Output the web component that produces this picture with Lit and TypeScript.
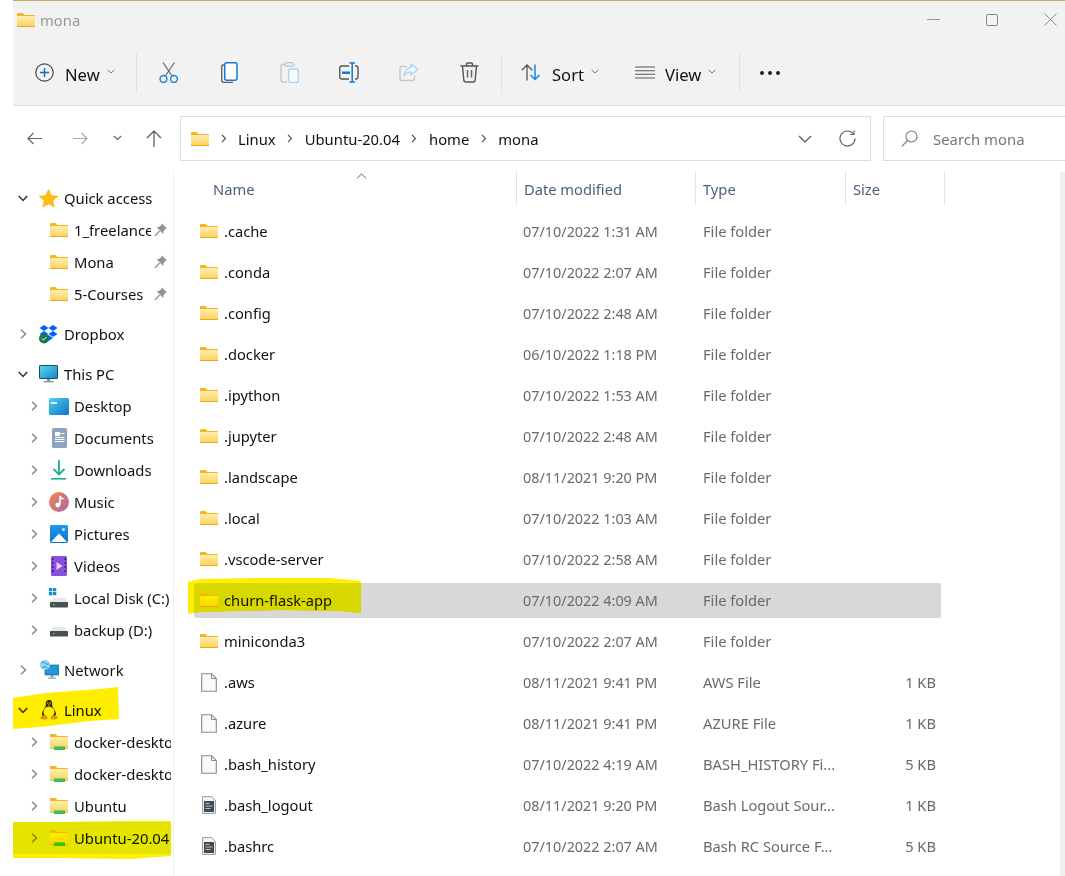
import { LitElement, html, svg, css } from "lit";
import { customElement } from "lit/decorators.js";

const folder = () => html`<svg class="ic" width="18" height="14" viewBox="0 0 18 14"><defs><linearGradient id="fg" x1="0" y1="0" x2="0" y2="1"><stop offset="0" stop-color="#ffeeb0"/><stop offset="1" stop-color="#fcd258"/></linearGradient></defs><path d="M0 1.2Q0 0 1.2 0H5.5L7.5 2H17.2Q18 2 18 3V4H0Z" fill="#f6b51e"/><rect y="3" width="18" height="11" rx=".8" fill="url(#fg)"/><rect y="13" width="18" height="1" fill="#e9aa20"/></svg>`;
const wsl = () => html`<svg class="ic" width="18" height="16" viewBox="0 0 18 16"><defs><linearGradient id="fg2" x1="0" y1="0" x2="0" y2="1"><stop offset="0" stop-color="#ffeeb0"/><stop offset="1" stop-color="#fcd258"/></linearGradient></defs><path d="M0 1.2Q0 0 1.2 0H5.5L7.5 2H17.2Q18 2 18 3V4H0Z" fill="#f6b51e"/><rect y="3" width="18" height="11.5" rx=".8" fill="url(#fg2)"/><rect y="14" width="18" height="1" fill="#c9c2a8"/><rect x="4" y="12.4" width="11" height="3.6" fill="#3fbf4f"/></svg>`;
const star = () => html`<svg class="ic" width="19" height="19" viewBox="0 0 19 19"><path d="M9.5.6 12.2 6.6 18.7 7.3 13.8 11.6 15.2 18 9.5 14.7 3.8 18 5.2 11.6.3 7.3 6.8 6.6Z" fill="#ffbe0b" stroke="#f3a800" stroke-width=".6" stroke-linejoin="round"/></svg>`;
const dropbox = () => html`<svg class="ic" width="19" height="19" viewBox="0 0 19 19"><g fill="#0061fe"><path d="M5 0 9.5 3 5 6 .5 3Z"/><path d="M14 0 18.5 3 14 6 9.5 3Z"/><path d="M5 6 9.5 9 5 12 .5 9Z"/><path d="M14 6 18.5 9 14 12 9.5 9Z"/><path d="M9.5 10 14 13 9.5 16 5 13Z"/></g><circle cx="5" cy="13.5" r="5" fill="#0e7d4b"/><path d="M2.8 13.6 4.4 15.2 7.3 12" fill="none" stroke="#fff" stroke-width="1"/></svg>`;
const monitor = () => html`<svg class="ic" width="19" height="18" viewBox="0 0 19 18"><defs><linearGradient id="mg" x1="0" y1="0" x2="1" y2="1"><stop offset="0" stop-color="#5fd6ee"/><stop offset="1" stop-color="#1287c4"/></linearGradient></defs><rect x=".5" y=".5" width="18" height="13" rx=".6" fill="url(#mg)" stroke="#17506f"/><rect x="8" y="14" width="3" height="2.4" fill="#7d8b93"/><rect x="4.5" y="16" width="10" height="1.4" fill="#8e9aa1"/></svg>`;
const desktop = () => html`<svg class="ic" width="20" height="17" viewBox="0 0 20 17"><defs><linearGradient id="dg" x1="0" y1="0" x2="1" y2="1"><stop offset="0" stop-color="#4fd0f2"/><stop offset="1" stop-color="#1271c6"/></linearGradient></defs><rect width="20" height="17" rx="1.5" fill="url(#dg)"/><rect x="2" y="4" width="6" height="2" fill="#d5f4ff"/></svg>`;
const docs = () => html`<svg class="ic" width="15" height="20" viewBox="0 0 15 20"><rect width="15" height="20" rx="1.5" fill="#8aa4c2"/><g fill="#fff"><rect x="3" y="4" width="5" height="4"/><rect x="8.5" y="5" width="4" height="1"/><rect x="3" y="9" width="9.5" height="1"/><rect x="3" y="11" width="9.5" height="1"/><rect x="3" y="13" width="9.5" height="1"/></g></svg>`;
const downloads = () => html`<svg class="ic" width="16" height="20" viewBox="0 0 16 20"><path d="M8 0V14M2.5 9 8 14.5 13.5 9" fill="none" stroke="#1db28d" stroke-width="1.8"/><rect y="18" width="15" height="1.6" fill="#1db28d"/></svg>`;
const music = () => html`<svg class="ic" width="20" height="20" viewBox="0 0 20 20"><defs><linearGradient id="mu" x1="0" y1="0" x2="1" y2="1"><stop offset="0" stop-color="#f4864a"/><stop offset="1" stop-color="#a76aa2"/></linearGradient></defs><circle cx="10" cy="10" r="10" fill="url(#mu)"/><path d="M11 4V12.5" stroke="#fff" stroke-width="1.6"/><path d="M11 4Q12 6.500 14.500 7" stroke="#fff" stroke-width="1.4" fill="none"/><circle cx="8.800" cy="13" r="2.400" fill="#fff"/></svg>`;
const pictures = () => html`<svg class="ic" width="18" height="18" viewBox="0 0 18 18"><defs><linearGradient id="pg" x1="0" y1="0" x2="0" y2="1"><stop offset="0" stop-color="#1b9bf0"/><stop offset="1" stop-color="#1470c8"/></linearGradient></defs><rect width="18" height="18" rx="1.4" fill="url(#pg)"/><path d="M1 17 9 8.500 17 17Z" fill="#fff"/><circle cx="13.500" cy="4.500" r="1.600" fill="#bfe6ff"/></svg>`;
const videos = () => html`<svg class="ic" width="16" height="20" viewBox="0 0 16 20"><rect width="16" height="20" rx="1.6" fill="#8a4fdc"/><g fill="#3f1d7d"><rect x="1" y="2" width="1.500" height="2"/><rect x="1" y="6" width="1.500" height="2"/><rect x="1" y="10" width="1.500" height="2"/><rect x="1" y="14" width="1.500" height="2"/><rect x="13.500" y="2" width="1.500" height="2"/><rect x="13.500" y="6" width="1.500" height="2"/><rect x="13.500" y="10" width="1.500" height="2"/><rect x="13.500" y="14" width="1.500" height="2"/></g><path d="M5.500 6 11.500 10 5.500 14Z" fill="#e2d2ff"/></svg>`;
const diskBody = svg`<path d="M3 6H15L18 10.500H0Z" fill="#e6e8ea"/><rect y="10" width="18" height="5.500" rx=".8" fill="#4a4f53"/><rect x="3" y="12" width="1.500" height="1.200" fill="#5fe06a"/>`;
const localDisk = () => html`<svg class="ic" width="18" height="20" viewBox="0 0 18 20" style="overflow:visible"><g transform="translate(0 4)">${diskBody}</g><g fill="#1a86dc"><rect x="-1" y="0" width="3.300" height="3.300"/><rect x="3" y="0" width="3.300" height="3.300"/><rect x="-1" y="4" width="3.300" height="3.300"/><rect x="3" y="4" width="3.300" height="3.300"/></g></svg>`;
const backup = () => html`<svg class="ic" width="18" height="16" viewBox="0 0 18 16"><g transform="translate(0 -1)">${diskBody}</g></svg>`;
const network = () => html`<svg class="ic" width="20" height="20" viewBox="0 0 20 20"><rect x="6" y="5" width="14" height="10" rx=".6" fill="#1f9ad6" stroke="#1a5f85" stroke-width=".7"/><rect x="11.500" y="15" width="3" height="2.500" fill="#8a98a0"/><rect x="9" y="17.500" width="8" height="1.300" fill="#9aa6ad"/><circle cx="6" cy="5" r="5" fill="#8fd3f0"/><path d="M2 3Q5 1 6 3T10 4M3 8Q6 5 8 8" fill="none" stroke="#2a8fc4" stroke-width="1"/></svg>`;
const penguin = () => html`<svg class="ic" width="18" height="20" viewBox="0 0 18 20"><path d="M9 0C6 0 5.600 2.500 5.800 5 6 7.500 2 10.500 2 14 2 16 4 17 9 17S16 16 16 14C16 10.500 12 7.500 12.200 5 12.400 2.500 12 0 9 0Z" fill="#2c2c2c"/><ellipse cx="9" cy="12" rx="5.500" ry="5.400" fill="#fff"/><path d="M7.500 4.500H10.500L9 6Z" fill="#e8a800"/><circle cx="7.800" cy="3" r=".7" fill="#fff"/><circle cx="10.200" cy="3" r=".7" fill="#fff"/><ellipse cx="4" cy="17.500" rx="3.500" ry="2" fill="#e2a20c"/><ellipse cx="14" cy="17.500" rx="3.500" ry="2" fill="#e2a20c"/></svg>`;
const pin = () => html`<svg class="pin" width="13" height="14" viewBox="0 0 13 14"><path d="M8 .5 12.700 5.200 11.300 5.900 9.500 8.500 9.200 11 2.500 4.300 5 4 7.300 2.200Z" fill="#8c959c"/><path d="M5.500 8 .8 13" stroke="#8c959c" stroke-width="1.300"/></svg>`;
const chevR = () => html`<svg width="7" height="10" viewBox="0 0 7 10"><path d="M1 .8 5.500 5 1 9.200" fill="none" stroke="#8a8a8a" stroke-width="1.500"/></svg>`;
const chevD = () => html`<svg width="10" height="7" viewBox="0 0 10 7"><path d="M.8 1 5 5.500 9.200 1" fill="none" stroke="#333" stroke-width="1.500"/></svg>`;
const tinyD = () => html`<svg class="tiny" width="8" height="5" viewBox="0 0 8 5"><path d="M.6.8 4 4 7.400.8" fill="none" stroke="#777" stroke-width="1"/></svg>`;
const crumbSep = () => html`<svg class="crumb-sep" width="6" height="9" viewBox="0 0 6 9"><path d="M1 .8 4.500 4.500 1 8.200" fill="none" stroke="#555" stroke-width="1.200"/></svg>`;
const fileIcon = () => html`<svg class="ic" width="16" height="19" viewBox="0 0 16 19"><path d="M.7.7H10.500L15.300 5.500V18.300H.7Z" fill="#fafafa" stroke="#8a8a8a" stroke-width="1.100"/><path d="M10.500.7V5.500H15.300" fill="none" stroke="#8a8a8a" stroke-width="1"/></svg>`;
const srcIcon = () => html`<svg class="ic" width="14" height="18" viewBox="0 0 14 18"><path d="M.6.6H9.500L13.400 4.500V17.400H.6Z" fill="#f4f4f4" stroke="#9a9a9a" stroke-width="1"/><rect x="2" y="5" width="10" height="11" fill="#3f4b52"/><g fill="#b6c0c6"><rect x="3.500" y="7" width="4" height="1"/><rect x="3.500" y="9.500" width="7" height="1"/><rect x="3.500" y="12" width="5" height="1"/></g></svg>`;

const scissors = html`<svg width="20" height="21" viewBox="0 0 20 21"><path d="M4 .5 13.500 14.500M15.500.5 6 14.500" fill="none" stroke="#666" stroke-width="1.200"/><circle cx="4.500" cy="17" r="3.400" fill="none" stroke="#1d86dc" stroke-width="1.500"/><circle cx="15" cy="17" r="3.400" fill="none" stroke="#1d86dc" stroke-width="1.500"/></svg>`;
const copy = html`<svg width="17" height="21" viewBox="0 0 17 21"><path d="M3 3H2Q.7 3 .7 4.500V18Q.7 20.300 3 20.300H12" fill="none" stroke="#5f5f5f" stroke-width="1.300"/><rect x="3.700" y=".8" width="12.300" height="17.500" rx="2" fill="#fff" stroke="#1279d6" stroke-width="1.500"/></svg>`;
const paste = html`<svg width="19" height="21" viewBox="0 0 19 21"><path d="M11 2.500H3Q1 2.500 1 4.500V18Q1 20.200 3 20.200H7" fill="none" stroke="#c4c4c4" stroke-width="1.300"/><path d="M15 2.500H14" fill="none" stroke="#c4c4c4" stroke-width="1.300"/><rect x="5" y=".7" width="8" height="3.500" rx="1" fill="#f2f2f2" stroke="#c4c4c4" stroke-width="1.200"/><rect x="8.700" y="7" width="9.500" height="13.300" rx="1.600" fill="#f6fbff" stroke="#a9d3f3" stroke-width="1.300"/></svg>`;
const rename = html`<svg width="20" height="21" viewBox="0 0 20 21"><path d="M10 4H2.500Q.8 4 .8 5.700V15.300Q.8 17 2.500 17H10M16 4H17.300Q19 4 19 5.700V15.300Q19 17 17.300 17H16" fill="none" stroke="#555" stroke-width="1.400"/><rect x="3" y="9.500" width="8" height="2.500" fill="#1279d6"/><path d="M10.500 1H16M13.200 1V20M10.500 20H16" fill="none" stroke="#1279d6" stroke-width="1.500"/></svg>`;
const share = html`<svg width="20" height="19" viewBox="0 0 20 19"><path d="M8 3.500H3Q1 3.500 1 5.500V15.500Q1 17.500 3 17.500H13.500Q15.500 17.500 15.500 15.500V13" fill="none" stroke="#c8c8c8" stroke-width="1.500"/><path d="M12 1 18.800 6.500 12 12V8.800Q7.500 8.800 5 13 5.500 5.500 12 4.300Z" fill="#f4f9fd" stroke="#a9d3f3" stroke-width="1.200" stroke-linejoin="round"/></svg>`;
const trash = html`<svg width="19" height="21" viewBox="0 0 19 21"><path d="M.5 4H18.500M6.500 3.500V2.200Q6.500 1 7.700 1H11.300Q12.500 1 12.500 2.200V3.500M2.500 4 3.800 18Q4 20 6 20H13Q15 20 15.200 18L16.500 4" fill="none" stroke="#555" stroke-width="1.400"/><path d="M7.500 8V15.500M11.500 8V15.500" fill="none" stroke="#666" stroke-width="1.500"/></svg>`;
const plus = html`<svg width="19" height="19" viewBox="0 0 19 19"><circle cx="9.500" cy="9.500" r="8.700" fill="none" stroke="#4a4a4a" stroke-width="1.200"/><path d="M9.500 5V14M5 9.500H14" stroke="#0f6cbd" stroke-width="1.400"/></svg>`;
const sortIc = html`<svg width="20" height="17" viewBox="0 0 20 17"><path d="M6 16.500V1M.8 6.200 6 1 11.200 6.200" fill="none" stroke="#555" stroke-width="1.300"/><path d="M14 .5V15.500M9.500 11 14 15.500 18.500 11" fill="none" stroke="#1d86dc" stroke-width="1.500"/></svg>`;
const viewIc = html`<svg width="20" height="13" viewBox="0 0 20 13"><path d="M0 1H20M0 4.700H20M0 8.300H20M0 12H20" stroke="#555" stroke-width="1.100"/></svg>`;

type Nav = { t: string; i: () => unknown; l: 0 | 1; c?: "r" | "d"; sep?: boolean; p?: boolean };
const nav: Nav[] = [
  { t: "Quick access", i: star, l: 0, c: "d" },
  { t: "1_freelance", i: folder, l: 1, p: true },
  { t: "Mona", i: folder, l: 1, p: true },
  { t: "5-Courses", i: folder, l: 1, p: true },
  { t: "Dropbox", i: dropbox, l: 0, c: "r", sep: true },
  { t: "This PC", i: monitor, l: 0, c: "d", sep: true },
  { t: "Desktop", i: desktop, l: 1, c: "r" },
  { t: "Documents", i: docs, l: 1, c: "r" },
  { t: "Downloads", i: downloads, l: 1, c: "r" },
  { t: "Music", i: music, l: 1, c: "r" },
  { t: "Pictures", i: pictures, l: 1, c: "r" },
  { t: "Videos", i: videos, l: 1, c: "r" },
  { t: "Local Disk (C:)", i: localDisk, l: 1, c: "r" },
  { t: "backup (D:)", i: backup, l: 1, c: "r" },
  { t: "Network", i: network, l: 0, c: "r", sep: true },
  { t: "Linux", i: penguin, l: 0, c: "d", sep: true },
  { t: "docker-desktop", i: wsl, l: 1, c: "r" },
  { t: "docker-desktop-data", i: wsl, l: 1, c: "r" },
  { t: "Ubuntu", i: wsl, l: 1, c: "r" },
  { t: "Ubuntu-20.04", i: wsl, l: 1, c: "r" },
];

const rows: [string, string, string, string, () => unknown][] = [
  [".cache", "07/10/2022 1:31 AM", "File folder", "", folder],
  [".conda", "07/10/2022 2:07 AM", "File folder", "", folder],
  [".config", "07/10/2022 2:48 AM", "File folder", "", folder],
  [".docker", "06/10/2022 1:18 PM", "File folder", "", folder],
  [".ipython", "07/10/2022 1:53 AM", "File folder", "", folder],
  [".jupyter", "07/10/2022 2:48 AM", "File folder", "", folder],
  [".landscape", "08/11/2021 9:20 PM", "File folder", "", folder],
  [".local", "07/10/2022 1:03 AM", "File folder", "", folder],
  [".vscode-server", "07/10/2022 2:58 AM", "File folder", "", folder],
  ["churn-flask-app", "07/10/2022 4:09 AM", "File folder", "", folder],
  ["miniconda3", "07/10/2022 2:07 AM", "File folder", "", folder],
  [".aws", "08/11/2021 9:41 PM", "AWS File", "1 KB", fileIcon],
  [".azure", "08/11/2021 9:41 PM", "AZURE File", "1 KB", fileIcon],
  [".bash_history", "07/10/2022 4:19 AM", "BASH_HISTORY Fi...", "5 KB", fileIcon],
  [".bash_logout", "08/11/2021 9:20 PM", "Bash Logout Sour...", "1 KB", srcIcon],
  [".bashrc", "07/10/2022 2:07 AM", "Bash RC Source F...", "5 KB", srcIcon],
];

@customElement("app-root")
export class AppRoot extends LitElement {
  static styles = css`
    :host { display: block; width: 1065px; height: 876px; overflow: hidden; background: #fff; position: relative;
      font-family: "Noto Sans", "Open Sans", sans-serif; font-size: 14.7px; color: #111; }
    .window { height: 876px; margin-left: 13px; display: flex; flex-direction: column; }
    .title { height: 50px; flex: none; box-sizing: border-box; background: #f2f2f2; border-top: 1px solid #c3ab5d; display: flex; align-items: center; padding: 0 0 12px 4px; color: #999; font-size: 14.8px; }
    .title .name { margin-left: 5px; }
    .ctrls { margin-left: auto; display: flex; align-items: center; gap: 46px; padding-right: 8px; }
    .cmd { height: 56px; flex: none; box-sizing: border-box; background: #f2f2f2; border-bottom: 1px solid #dedede; display: flex; align-items: center; padding-left: 22px; padding-bottom: 10px; font-size: 16.6px; }
    .new { width: 101px; display: flex; align-items: center; flex: none; }
    .new .txt, .drop .txt { margin-left: 11px; padding-top: 4px; }
    .drop .view { margin-left: 10px; }
    .tiny { margin-left: 7px; margin-top: -2px; }
    .vsep { width: 1px; height: 40px; background: #e2e2e2; flex: none; }
    .vsep.a { margin-left: 23px; }
    .btn { width: 60px; flex: none; display: flex; justify-content: center; align-items: center; height: 22px; }
    .btns { display: flex; margin: 0 2px; }
    .drop { display: flex; align-items: center; flex: none; }
    .drop.s { margin-left: 19px; }
    .drop.v { margin-left: 36px; }
    .more { margin-left: 20px; display: flex; gap: 4px; }
    .more i { width: 4px; height: 4px; border-radius: 50%; background: #222; display: block; }
    .navbar { height: 66px; flex: none; display: flex; align-items: flex-start; padding-top: 10px; box-sizing: border-box; background: #fff; }
    .arrows { width: 167px; flex: none; height: 45px; display: flex; align-items: center; }
    .arrows .back { margin-left: 14px; }
    .arrows .fwd { margin-left: 31px; }
    .arrows .hist { margin-left: 25px; margin-top: -2px; }
    .arrows .up { margin-left: 24px; }
    .addr { width: 691px; flex: none; height: 45px; box-sizing: border-box; border: 1px solid #dcdcdc; display: flex; align-items: center; padding-left: 10px; font-size: 14.8px; }
    .crumb-sep { margin: 0 11.5px; }
    .addr-end { margin-left: auto; display: flex; align-items: center; gap: 27px; padding-right: 14px; }
    .search { margin-left: 12px; flex: 1; height: 45px; box-sizing: border-box; border: 1px solid #dcdcdc; border-right: none; display: flex; align-items: center; padding-left: 17px; color: #777; font-size: 14.9px; }
    .search span { margin-left: 15px; }
    .body { flex: 1; display: flex; min-height: 0; }
    .side { width: 161px; flex: none; box-sizing: border-box; border-right: 1px solid #f0f0f0; padding-top: 10px; overflow: hidden; font-size: 14.8px; }
    .nv { height: 32px; display: flex; align-items: center; }
    .nv.sep { margin-top: 8px; }
    .nv.selected { background: #e4e4e4; margin-right: 2px; }
    .nv .chev { width: 20px; flex: none; display: flex; justify-content: center; }
    .nv .ibox { width: 19px; margin-left: 6px; margin-right: 6px; flex: none; display: flex; justify-content: center; align-items: center; }
    .nv.l1 { padding-left: 11px; }
    .nv.l1 .ibox { width: 18px; }
    .nv .lbl { white-space: nowrap; overflow: hidden; flex: 1; min-width: 0; margin-right: 2px; }
    .nv .lbl.pinned { flex: none; width: 77px; margin-right: 3px; }
    .nv.selected .lbl { margin-right: 0; }
    .ic { display: block; flex: none; }
    .pin { flex: none; }
    .main { flex: 1; min-width: 0; padding-left: 20px; }
    .track { width: 5px; flex: none; background: #f0f0f0; }
    .head { display: grid; grid-template-columns: 322px 179px 150px 100px; width: 751px; height: 33px; color: #4d5f78; position: relative; }
    .head > div { display: flex; align-items: center; padding-left: 7px; border-left: 1px solid #e3e3e3; box-sizing: border-box; }
    .head > div:first-child { border-left: none; padding-left: 19px; }
    .head .last { border-right: 1px solid #e3e3e3; }
    .caret { position: absolute; left: 162px; top: 1px; }
    .rows { display: flex; flex-direction: column; gap: 6px; margin-top: 8.5px; }
    .row { display: grid; grid-template-columns: 322px 179px 150px 96px; width: 747px; height: 35px; align-items: center; border-radius: 2px; color: #6a6a6a; }
    .row.sel { background: #d8d8d8; }
    .row .n { display: flex; align-items: center; gap: 6px; padding-left: 6px; color: #111; }
    .row .n .wrap { width: 18px; flex: none; display: flex; justify-content: center; }
    .row .d { padding-left: 7px; font-size: 14.4px; }
    .row .t { padding-left: 8px; white-space: nowrap; }
    .row .s { text-align: right; padding-right: 5px; white-space: nowrap; }
    .hl { position: absolute; left: 0; top: 0; width: 1065px; height: 876px; mix-blend-mode: multiply; pointer-events: none; }
  `;

  render() {
    return html`
      <div class="window">
        <div class="title">
          ${folder()}<span class="name">mona</span>
          <div class="ctrls">
            <svg width="13" height="13" viewBox="0 0 13 13"><path d="M0 6.500H13" stroke="#999" stroke-width="1"/></svg>
            <svg width="12" height="12" viewBox="0 0 12 12"><rect x=".5" y=".5" width="11" height="11" rx="1.200" fill="none" stroke="#8a8a8a"/></svg>
            <svg width="13" height="13" viewBox="0 0 13 13"><path d="M.5.5 12.500 12.500M12.500.5.500 12.500" stroke="#8a8a8a" stroke-width="1"/></svg>
          </div>
        </div>
        <div class="cmd">
          <div class="new">${plus}<span class="txt">New</span>${tinyD()}</div>
          <div class="vsep"></div>
          <div class="btns">
            <div class="btn">${scissors}</div><div class="btn">${copy}</div><div class="btn">${paste}</div>
            <div class="btn">${rename}</div><div class="btn">${share}</div><div class="btn">${trash}</div>
          </div>
          <div class="vsep"></div>
          <div class="drop s">${sortIc}<span class="txt">Sort</span>${tinyD()}</div>
          <div class="drop v">${viewIc}<span class="txt view">View</span>${tinyD()}</div>
          <div class="vsep a"></div>
          <div class="more"><i></i><i></i><i></i></div>
        </div>
        <div class="navbar">
          <div class="arrows">
            <svg class="back" width="15" height="13" viewBox="0 0 15 13"><path d="M15 6.500H1M6.500 1 1 6.500 6.500 12" fill="none" stroke="#666" stroke-width="1.200"/></svg>
            <svg class="fwd" width="15" height="13" viewBox="0 0 15 13"><path d="M0 6.500H14M8.500 1 14 6.500 8.500 12" fill="none" stroke="#aaa" stroke-width="1.200"/></svg>
            <svg class="hist" width="9" height="6" viewBox="0 0 9 6"><path d="M.8 1 4.500 4.500 8.200 1" fill="none" stroke="#666" stroke-width="1.200"/></svg>
            <svg class="up" width="16" height="17" viewBox="0 0 16 17"><path d="M8 17V1M1 8 8 1 15 8" fill="none" stroke="#555" stroke-width="1.200"/></svg>
          </div>
          <div class="addr">
            ${folder()}${crumbSep()}<span>Linux</span>${crumbSep()}<span>Ubuntu-20.04</span>${crumbSep()}<span>home</span>${crumbSep()}<span>mona</span>
            <div class="addr-end">
              <svg width="14" height="8" viewBox="0 0 14 8"><path d="M1 1 7 7 13 1" fill="none" stroke="#555" stroke-width="1.200"/></svg>
              <svg width="17" height="17" viewBox="0 0 17 17"><path d="M14.500 4A7.500 7.500 0 1 0 16 8.500" fill="none" stroke="#666" stroke-width="1.200"/><path d="M15 .5V4.500H11" fill="none" stroke="#666" stroke-width="1.200"/></svg>
            </div>
          </div>
          <div class="search">
            <svg width="17" height="17" viewBox="0 0 17 17"><circle cx="10.500" cy="6.500" r="5.500" fill="none" stroke="#777" stroke-width="1.100"/><path d="M6.500 10.500 .8 16.300" stroke="#777" stroke-width="1.200"/></svg>
            <span>Search mona</span>
          </div>
        </div>
        <div class="body">
          <div class="side">
            ${nav.map((n) => html`
              <div class="nv ${n.l ? "l1" : ""} ${n.sep ? "sep" : ""} ${n.t === "Ubuntu-20.04" ? "selected" : ""}">
                <div class="chev">${n.c === "d" ? chevD() : n.c === "r" ? chevR() : ""}</div>
                <div class="ibox">${n.i()}</div>
                <span class="lbl ${n.p ? "pinned" : ""}">${n.t}</span>
                ${n.p ? pin() : ""}
              </div>`)}
          </div>
          <div class="main">
            <div class="head">
              <div>Name</div><div>Date modified</div><div>Type</div><div class="last">Size</div>
              <svg class="caret" width="11" height="6" viewBox="0 0 11 6"><path d="M.8 5.300 5.500 1 10.200 5.300" fill="none" stroke="#666" stroke-width="1"/></svg>
            </div>
            <div class="rows">
              ${rows.map((r) => html`
                <div class="row ${r[0] === "churn-flask-app" ? "sel" : ""}">
                  <div class="n"><span class="wrap">${r[4]()}</span><span>${r[0]}</span></div>
                  <div class="d">${r[1]}</div><div class="t">${r[2]}</div><div class="s">${r[3]}</div>
                </div>`)}
            </div>
          </div>
          <div class="track"></div>
        </div>
      </div>
      <svg class="hl" viewBox="0 0 1065 876">
        <path d="M188 582 200 579 260 578 330 578 361 581 361 613 340 611 280 610 200 612 188 614Z" fill="#ffee00"/>
        <path d="M194 582.500H361V613L340 611 280 610 200 612 194 613Z" fill="#ffff00"/>
        <path d="M13 698 45 693 100 689 118 687 119 719 90 721 40 727 13 729Z" fill="#ffee00"/>
        <path d="M13 822 60 822 120 821 171 821 171 856 130 859 60 858 13 858Z" fill="#ffee00"/>
        <path d="M13 822H171V854H13Z" fill="#ffff00"/>
      </svg>
    `;
  }
}
